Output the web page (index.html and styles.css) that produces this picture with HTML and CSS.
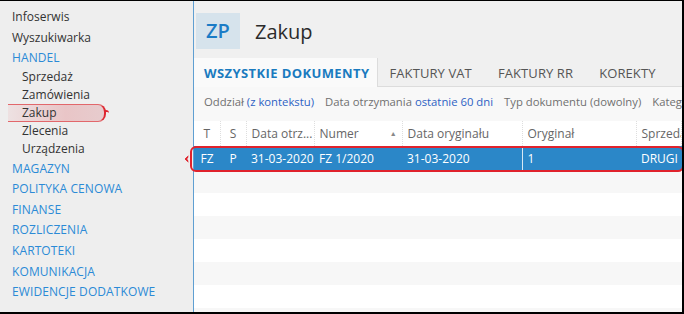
FILE: index.html
```html
<!DOCTYPE html>
<html lang="pl">

<head>
    <meta charset="UTF-8">
    <title>Zakup</title>
    <link rel="stylesheet" href="styles.css">
</head>

<body>
    <div class="app">
        <aside class="nav">
            <div class="nav-item">Infoserwis</div>
            <div class="nav-item">Wyszukiwarka</div>
            <div class="nav-group">HANDEL</div>
            <div class="nav-sub">
                <div class="sub-item">Sprzedaż</div>
                <div class="sub-item">Zamówienia</div>
                <div class="sub-item marked">Zakup</div>
                <div class="sub-item">Zlecenia</div>
                <div class="sub-item">Urządzenia</div>
            </div>
            <div class="nav-group">MAGAZYN</div>
            <div class="nav-group">POLITYKA CENOWA</div>
            <div class="nav-group">FINANSE</div>
            <div class="nav-group">ROZLICZENIA</div>
            <div class="nav-group">KARTOTEKI</div>
            <div class="nav-group">KOMUNIKACJA</div>
            <div class="nav-group">EWIDENCJE DODATKOWE</div>
        </aside>

        <main class="module">
            <header class="module-head">
                <span class="badge">ZP</span>
                <h1>Zakup</h1>
            </header>

            <nav class="tabs">
                <span class="tab active">WSZYSTKIE DOKUMENTY</span>
                <span class="tab">FAKTURY VAT</span>
                <span class="tab">FAKTURY RR</span>
                <span class="tab">KOREKTY</span>
                <span class="tab">PARAGONY</span>
            </nav>

            <div class="filters">
                <span>Oddział <a>(z kontekstu)</a></span>
                <span>Data otrzymania <a>ostatnie 60 dni</a></span>
                <span>Typ dokumentu (dowolny)</span>
                <span>Kategoria</span>
            </div>

            <div class="grid">
                <table>
                    <colgroup>
                        <col style="width: 26px">
                        <col style="width: 26px">
                        <col style="width: 68px">
                        <col style="width: 88px">
                        <col style="width: 120px">
                        <col style="width: 114px">
                        <col>
                    </colgroup>
                    <thead>
                        <tr>
                            <th class="c">T</th>
                            <th class="c">S</th>
                            <th>Data otrz...</th>
                            <th>Numer <span class="sort">▲</span></th>
                            <th>Data oryginału</th>
                            <th>Oryginał</th>
                            <th>Sprzedawca</th>
                        </tr>
                    </thead>
                    <tbody>
                        <tr class="selected">
                            <td class="c">FZ</td>
                            <td class="c">P</td>
                            <td>31-03-2020</td>
                            <td>FZ 1/2020</td>
                            <td>31-03-2020</td>
                            <td class="split">1</td>
                            <td>DRUGI</td>
                        </tr>
                        <tr><td colspan="7"></td></tr>
                        <tr><td colspan="7"></td></tr>
                        <tr><td colspan="7"></td></tr>
                        <tr><td colspan="7"></td></tr>
                        <tr><td colspan="7"></td></tr>
                        <tr><td colspan="7"></td></tr>
                        <tr><td colspan="7"></td></tr>
                    </tbody>
                </table>
                <span class="row-mark"></span>
            </div>
        </main>
    </div>
</body>

</html>
```

FILE: styles.css
```css
body {
    margin: 0;
    font-family: 'Open Sans', 'Noto Sans', sans-serif;
    color: #333;
}

.app {
    width: 684px;
    height: 314px;
    box-sizing: border-box;
    border-top: 1px solid #000;
    border-right: 2px solid #000;
    border-bottom: 2px solid #000;
    display: grid;
    grid-template-columns: 194px 1fr;
    overflow: hidden;
}

/* left menu */
.nav {
    background-color: #eeeeee;
    border-right: 1px solid #5f9fd2;
    padding: 6px 0 0 12px;
    font-size: 12px;
}

.nav-item {
    height: 20.5px;
    line-height: 20.5px;
}

.nav-group {
    height: 20.6px;
    line-height: 20.6px;
    color: #2b8ad6;
    font-size: 12px;
    letter-spacing: 0.1px;
}

.nav-sub {
    padding: 0 0 1px 10px;
    margin-top: -1px;
}

.sub-item {
    height: 18px;
    line-height: 18px;
}

.sub-item.marked {
    position: relative;
    z-index: 0;
}

.sub-item.marked::before {
    content: '';
    position: absolute;
    left: -14px;
    top: 0;
    width: 96px;
    height: 16px;
    border-top: 1px solid #e2676b;
    border-bottom: 1px solid #e2676b;
    border-right: 2px solid #de2630;
    border-radius: 0 8px 8px 0;
    background: linear-gradient(90deg, rgba(236, 196, 198, 0.3) 0%, rgba(232, 190, 192, 0.85) 60%, rgba(230, 200, 202, 0.9) 100%);
    z-index: -1;
}

.sub-item.marked::after {
    content: '';
    position: absolute;
    left: 82px;
    top: 6px;
    width: 5px;
    height: 4px;
    border-top: 2px solid #de2630;
    border-radius: 0 3px 0 0;
}

/* right module */
.module {
    background-color: #f0f0f0;
    display: flex;
    flex-direction: column;
    min-width: 0;
}

.module-head {
    display: flex;
    align-items: center;
    height: 57px;
    padding-left: 2px;
}

.badge {
    width: 44px;
    height: 36px;
    margin-top: 3px;
    background-color: #d6e3ec;
    color: #1b7cc6;
    font-size: 20px;
    font-weight: 600;
    line-height: 36px;
    text-align: center;
}

.module-head h1 {
    margin: 3px 0 0 15px;
    font-size: 20px;
    font-weight: normal;
    color: #2b2b2b;
}

.tabs {
    display: flex;
    height: 28px;
    border-bottom: 1px solid #dcdcdc;
    white-space: nowrap;
    font-size: 13px;
    color: #555;
    letter-spacing: 0.1px;
}

.tab {
    line-height: 30px;
    padding: 0 15px 0 11px;
}

.tab.active {
    background-color: #fafafa;
    border-right: 1px solid #dcdcdc;
    color: #1a7bbf;
    font-weight: bold;
    padding: 0 8px 0 10px;
    margin-right: 0;
    height: 29px;
    letter-spacing: 0.4px;
}

.filters {
    display: flex;
    gap: 11px;
    height: 34px;
    line-height: 30px;
    padding-left: 10px;
    background-color: #f8f8f8;
    font-size: 11.3px;
    color: #707070;
    white-space: nowrap;
}

.filters a {
    color: #2d62c4;
}

.grid {
    position: relative;
    flex: 1;
    background-color: #fff;
}

.grid table {
    width: 100%;
    border-collapse: collapse;
    table-layout: fixed;
    font-size: 12px;
}

.grid th {
    height: 25px;
    padding: 0 0 0 5px;
    text-align: left;
    font-weight: normal;
    color: #666;
    border-right: 1px dotted #dedede;
    white-space: nowrap;
    overflow: hidden;
}

.grid td {
    height: 23px;
    padding: 0 0 0 5px;
    white-space: nowrap;
    overflow: hidden;
}

.grid .c {
    text-align: center;
    padding: 0;
}

.sort {
    font-size: 7px;
    color: #888;
    margin-left: 28px;
    vertical-align: 2px;
}

.grid tbody tr:nth-child(even) {
    background-color: #f7f7f7;
}

.grid tr.selected {
    background-color: #2b87c8;
    color: #fff;
}

.grid tr.selected td {
    height: 24px;
}

.grid tr.selected .split {
    border-left: 1px solid #d8e8f4;
}

/* red annotation around the chosen row */
.row-mark {
    position: absolute;
    left: -4px;
    top: 25px;
    width: 490px;
    height: 22px;
    border: 2px solid #e0222c;
    border-radius: 6px;
}

.row-mark::before {
    content: '';
    position: absolute;
    left: -6px;
    top: 7px;
    width: 6px;
    height: 6px;
    border-left: 2px solid #e0222c;
    border-top: 2px solid #e0222c;
    transform: rotate(-45deg);
    transform-origin: center;
    border-radius: 2px 0 0 0;
    background: transparent;
    clip-path: polygon(0 0, 70% 0, 0 70%);
}
```
